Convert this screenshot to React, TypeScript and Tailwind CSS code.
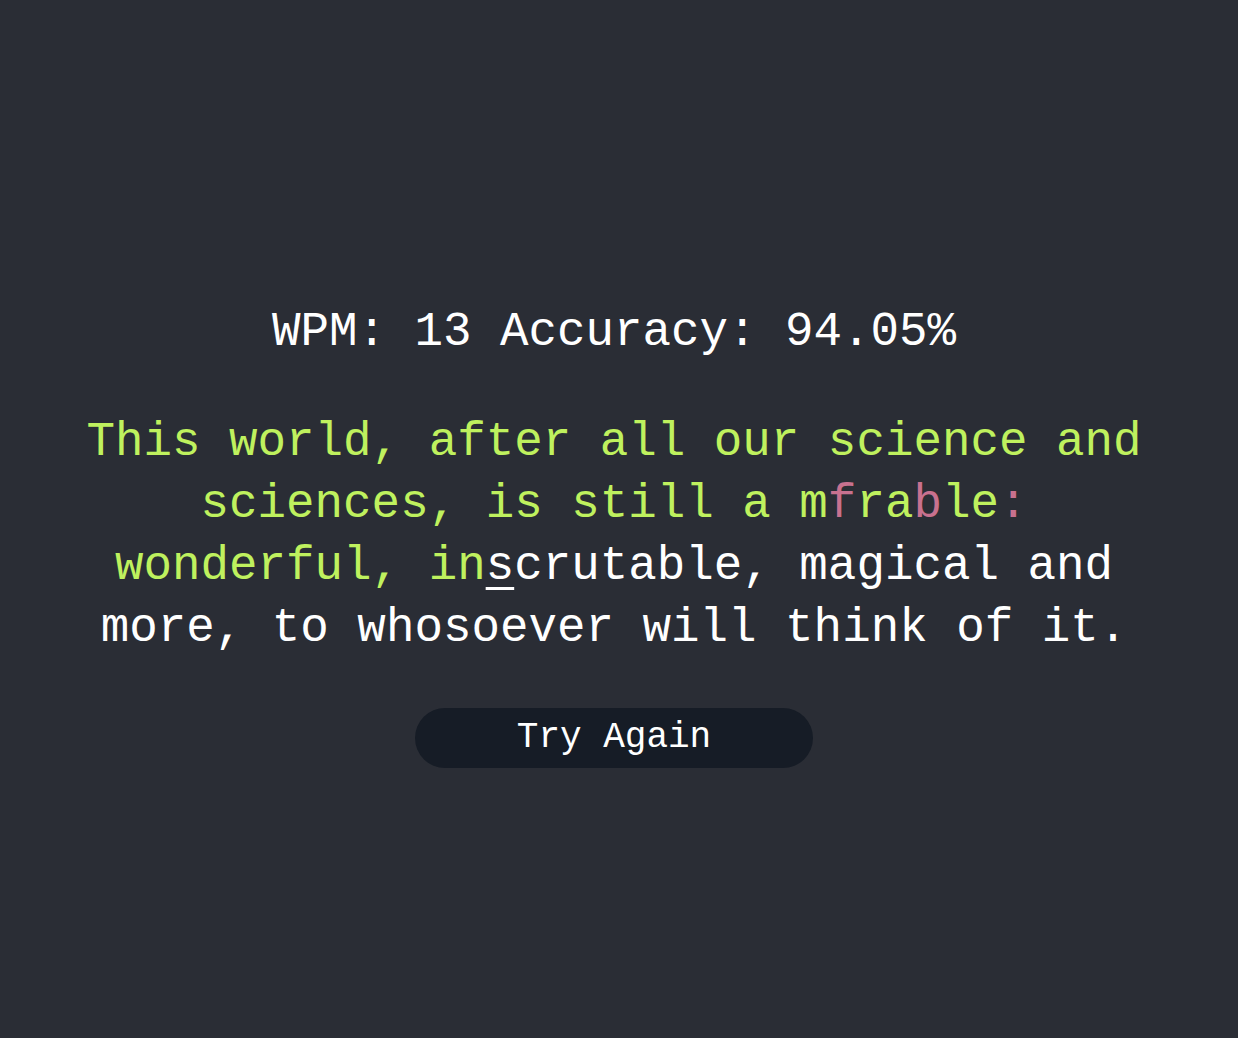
import { useState } from "react"

const quote =
  "This world, after all our science and sciences, is still a mfrable: wonderful, inscrutable, magical and more, to whosoever will think of it."

// index of the cursor (next char to type) and the mistyped positions
const cursor = 81
const wrong = new Set([60, 63, 66])

export default function App() {
  const [typed] = useState(cursor)

  return (
    <div
      className="min-h-screen w-full bg-[#2a2d35] flex flex-col items-center pt-[308px] pr-[10px]"
      style={{ fontFamily: '"Liberation Mono", "DejaVu Sans Mono", monospace' }}
    >
      <div className="text-white text-[47.5px] leading-[48px]">WPM: 13 Accuracy: 94.05%</div>

      <p className="mt-[55px] w-[1110px] text-center text-[47.5px] leading-[62px] whitespace-pre-wrap">
        {quote.split("").map((ch, i) => {
          let cls = "text-white"
          if (i < typed) cls = wrong.has(i) ? "text-[#c8718f]" : "text-[#bff15e]"
          if (i === typed) cls = "text-white underline decoration-[3px] underline-offset-[8px]"
          return (
            <span key={i} className={cls}>
              {ch}
            </span>
          )
        })}
      </p>

      <button
        type="button"
        className="mt-[49px] w-[398px] h-[60px] rounded-full bg-[#161c26] text-white text-[36px] leading-none"
      >
        Try Again
      </button>
    </div>
  )
}
